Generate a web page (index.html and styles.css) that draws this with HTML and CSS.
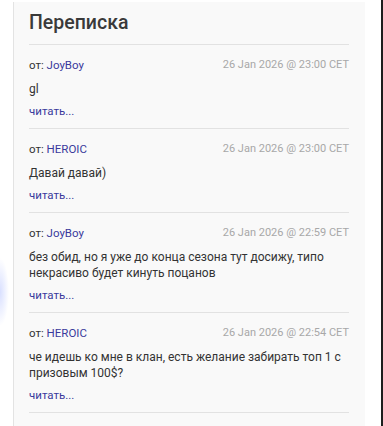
FILE: index.html
```html
<html><head><link rel="stylesheet" href="styles.css"></head><body>
<div class="page">
  <div class="mail">
    <h2 class="mail-title">Переписка</h2>
    <ul class="mail-list">
      <li class="msg">
        <div class="msg-head"><span class="msg-from">от: <a href="#">JoyBoy</a></span><span class="msg-date">26 Jan 2026 @ 23:00 CET</span></div>
        <div class="msg-text">gl</div>
        <a class="msg-read" href="#">читать...</a>
      </li>
      <li class="msg">
        <div class="msg-head"><span class="msg-from">от: <a href="#">HEROIC</a></span><span class="msg-date">26 Jan 2026 @ 23:00 CET</span></div>
        <div class="msg-text">Давай давай)</div>
        <a class="msg-read" href="#">читать...</a>
      </li>
      <li class="msg">
        <div class="msg-head"><span class="msg-from">от: <a href="#">JoyBoy</a></span><span class="msg-date">26 Jan 2026 @ 22:59 CET</span></div>
        <div class="msg-text">без обид, но я уже до конца сезона тут досижу, типо некрасиво будет кинуть поцанов</div>
        <a class="msg-read" href="#">читать...</a>
      </li>
      <li class="msg">
        <div class="msg-head"><span class="msg-from">от: <a href="#">HEROIC</a></span><span class="msg-date">26 Jan 2026 @ 22:54 CET</span></div>
        <div class="msg-text">че идешь ко мне в клан, есть желание забирать топ 1 с призовым 100$?</div>
        <a class="msg-read" href="#">читать...</a>
      </li>
    </ul>
  </div>
  <div class="edge"></div>
</div>
</body></html>
```
FILE: styles.css
```css
html, body{margin:0;padding:0;height:100%;overflow:hidden;}
body{background:#fff radial-gradient(ellipse 9px 34px at 0 292px, rgba(170,185,255,.45), rgba(170,185,255,0));font-family:Roboto, "Noto Sans", sans-serif;color:#333;}
.page{display:flex;height:100%;}
.mail{margin:2px 0 0 13px;width:320px;padding:0 16px 0 15px;border-left:1px solid #e3e3e3;background:#f9f9f9;min-height:424px;}
.mail-title{margin:0;padding:9px 0 9px;font-size:19.5px;line-height:24px;font-weight:500;color:#3a3a3a;border-bottom:1px solid #e2e2e2;}
.mail-list{list-style:none;margin:0;padding:0;}
.msg{padding:12px 0 9px;border-bottom:1px solid #e2e2e2;font-size:11.5px;line-height:16px;}
.msg-head{display:flex;justify-content:space-between;height:16px;}
.msg-from{color:#333;}
.msg-from a, .msg-read{color:#3a3a9c;text-decoration:none;}
.msg-date{color:#a8a8a8;font-size:11px;}
.msg-text{margin-top:8px;font-size:12px;color:#333;}
.msg-read{display:block;margin-top:6px;height:16px;}
.edge{margin-left:auto;width:2px;background:#1e1e1e;}
```
